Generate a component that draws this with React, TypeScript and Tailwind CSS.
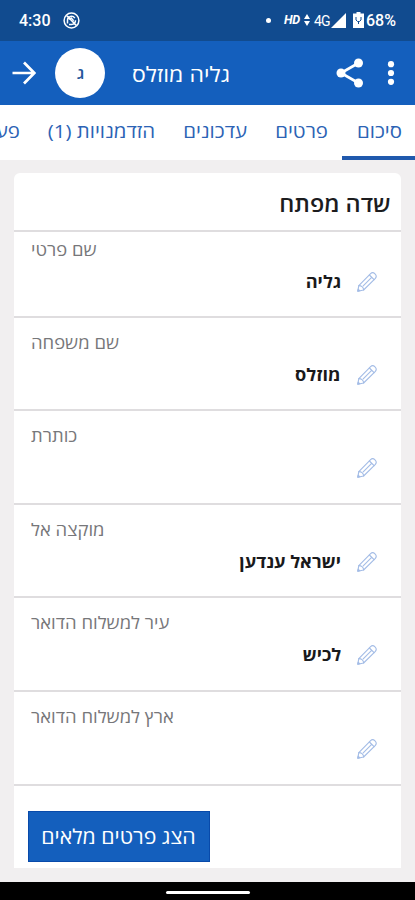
import React from "react";

const tabs = [
  { label: "סיכום", width: "w-[45px]" },
  { label: "פרטים", width: "w-[52px]" },
  { label: "עדכונים", width: "w-[63px]" },
  { label: "הזדמנויות (1)", width: "w-[106px]" },
  { label: "פעילויות", width: "w-[70px]" },
];

const fields = [
  { label: "שם פרטי", value: "גליה", height: "h-[86px]", pad: "pt-[7px]" },
  { label: "שם משפחה", value: "מוזלס", height: "h-[93px]", pad: "pt-[14px]" },
  { label: "כותרת", value: "", height: "h-[94px]", pad: "pt-[14px]" },
  { label: "מוקצה אל", value: "ישראל ענדען", height: "h-[93px]", pad: "pt-[14px]" },
  { label: "עיר למשלוח הדואר", value: "לכיש", height: "h-[94px]", pad: "pt-[14px]" },
  { label: "ארץ למשלוח הדואר", value: "", height: "h-[94px]", pad: "pt-[14px]" },
];

function Pencil() {
  return (
    <svg className="h-5 w-5 shrink-0" viewBox="0 0 20 20" fill="none" stroke="#a3bce6" strokeWidth="1.1" strokeLinejoin="round" strokeLinecap="round">
      <path d="M.8 19.2 1.8 13.6 13.6 1.6c2.8-2.6 7.3 1.7 4.8 4.8L6.6 18Z" />
      <path d="M1.8 13.6c2.7 0 4.8 2 4.8 4.4M6.2 13.8 14.4 5.6M12.4 3l4.7 4.7" />
      <path d="m.8 19.2 2-.4-1.6-1.6Z" fill="#92b0e2" />
    </svg>
  );
}

function StatusBar() {
  return (
    <div className="flex h-[41px] items-center bg-[#114b8f] pb-px pl-[19px] pr-[18px] font-['Roboto',sans-serif] text-white">
      <span className="w-[32px] pt-[2px] text-[16px] font-medium leading-none">4:30</span>
      <svg className="ml-3 h-[17px] w-[17px]" viewBox="0 0 17 17" fill="none" stroke="white">
        <circle cx="8.5" cy="8.5" r="7.4" strokeWidth="1.5" />
        <path d="M4.5 11.6V8.2a4 4 0 0 1 7.3-2.1M12.5 8.2a4 4 0 0 1-4 4.2H6M3.8 3.8l9.5 9.6" strokeWidth="1.5" />
        <path d="M6.4 7.4 8.2 6l2.5 2.8" strokeWidth="1.3" />
      </svg>
      <span className="ml-[186px] mt-px h-[5px] w-[5px] rounded-full bg-white" />
      <span className="ml-[13px] w-[17px] text-[12.5px] font-bold italic leading-none tracking-[-0.4px]">HD</span>
      <svg className="ml-[3px] h-3 w-[6px]" viewBox="0 0 6 12" fill="white"><path d="M3 0 6 5H0ZM0 7h6L3 12Z" /></svg>
      <span className="ml-[4px] w-[16px] pt-[2px] text-[14px] leading-none tracking-[-0.9px]">4G</span>
      <svg className="ml-[1px] h-[15px] w-[15px]" viewBox="0 0 15 15" fill="white"><path d="M15 0v15H0Z" /></svg>
      <svg className="ml-[7px] h-4 w-[11px]" viewBox="0 0 11 16">
        <path d="M3.5 0h4v1.5H11V16H0V1.5h3.5Z" fill="white" />
        <path d="M3 5v3l1.6 1.5h1.8L8 8V5M5.5 9v3" fill="none" stroke="#114b8f" strokeWidth="1" />
      </svg>
      <span className="ml-[2px] whitespace-nowrap pt-[2px] text-[16px] font-medium leading-none">68%</span>
    </div>
  );
}

function AppBar() {
  return (
    <div className="flex h-16 items-center bg-[#145fbd] pl-[12px] text-white">
      <svg className="h-6 w-6" viewBox="0 0 24 24" fill="none" stroke="white" strokeWidth="2.7"><path d="M.5 12h21.5M12 1.5 22.3 12 12 22.5" /></svg>
      <div className="ml-[19px] flex h-[50px] w-[50px] items-center justify-center rounded-full bg-white text-[16px] font-semibold text-[#24579b]"><span className="scale-x-110">ג</span></div>
      <h1 className="ml-[27px] w-[98px] origin-right scale-x-[1.1] whitespace-nowrap pt-[2px] text-[21px] leading-none" dir="rtl">גליה מוזלס</h1>
      <svg className="ml-[106px] h-[30px] w-[28px]" viewBox="0 0 28 30" fill="white">
        <path d="M22.5 5 5 15l17.5 10" fill="none" stroke="white" strokeWidth="2.7" />
        <circle cx="22.5" cy="5" r="4.5" /><circle cx="5" cy="15" r="4.5" /><circle cx="22.5" cy="25" r="4.5" />
      </svg>
      <svg className="ml-[23px] h-6 w-2" viewBox="0 0 8 24" fill="white"><circle cx="4" cy="3.2" r="3.1" /><circle cx="4" cy="12" r="3.1" /><circle cx="4" cy="20.8" r="3.1" /></svg>
    </div>
  );
}

export default function App() {
  return (
    <div className="flex h-[900px] w-[415px] flex-col overflow-hidden bg-[#f1eff0] font-['Open_Sans','DejaVu_Sans',sans-serif]">
      <StatusBar />
      <AppBar />
      <nav className="flex h-[55px] shrink-0 overflow-hidden bg-white" dir="rtl">
        {tabs.map((tab, i) => (
          <div key={tab.label} className={i === 0 ? "shrink-0 border-b-4 border-[#2059ad] pl-[15px] pr-[13px] pt-[15px]" : i === 1 ? "shrink-0 px-[14px] pt-[15px]" : "shrink-0 pl-[14px] pr-[15px] pt-[15px]"}>
            <span className={`block origin-right scale-x-[1.075] whitespace-nowrap text-[19px] leading-[22px] text-[#2c63b5] ${tab.width}`}>{tab.label}</span>
          </div>
        ))}
      </nav>
      <main className="mx-[14px] mt-[13px] flex h-[695px] shrink-0 flex-col rounded-t-[6px] bg-white">
        <h2 className="h-[59px] border-b-2 border-[#dfdddf] pr-[11px] pt-[16px] text-[22px] font-semibold leading-[28px] text-[#1c1c1e]" dir="rtl"><span className="inline-block origin-right scale-x-[1.065]">שדה מפתח</span></h2>
        {fields.map((f) => (
          <section key={f.label} className={`flex shrink-0 flex-col border-b-2 border-[#dfdddf] ${f.height} ${f.pad}`}>
            <div className="flex h-[22px] pl-[17px] text-[17px] leading-[22px] text-[#77777a]"><span className="origin-left scale-x-[1.085]" dir="rtl">{f.label}</span></div>
            <div className="mt-[10px] flex h-[22px] items-center gap-[16px] pr-[24px]" dir="rtl">
              <Pencil />
              <span className="origin-right scale-x-[1.07] text-[17px] font-bold leading-[22px] text-[#19191b]">{f.value}</span>
            </div>
          </section>
        ))}
        <button className="ml-[14px] mt-[25px] h-[51px] w-[182px] border border-[#084aaa] bg-[#145fbd] text-[20px] leading-none text-white" dir="rtl"><span className="inline-block scale-x-[1.065]">הצג פרטים מלאים</span></button>
      </main>
      <footer className="mt-auto flex h-[18px] items-center justify-center bg-black pt-[3px]"><div className="h-[3px] w-[84px] rounded-full bg-white" /></footer>
    </div>
  );
}
